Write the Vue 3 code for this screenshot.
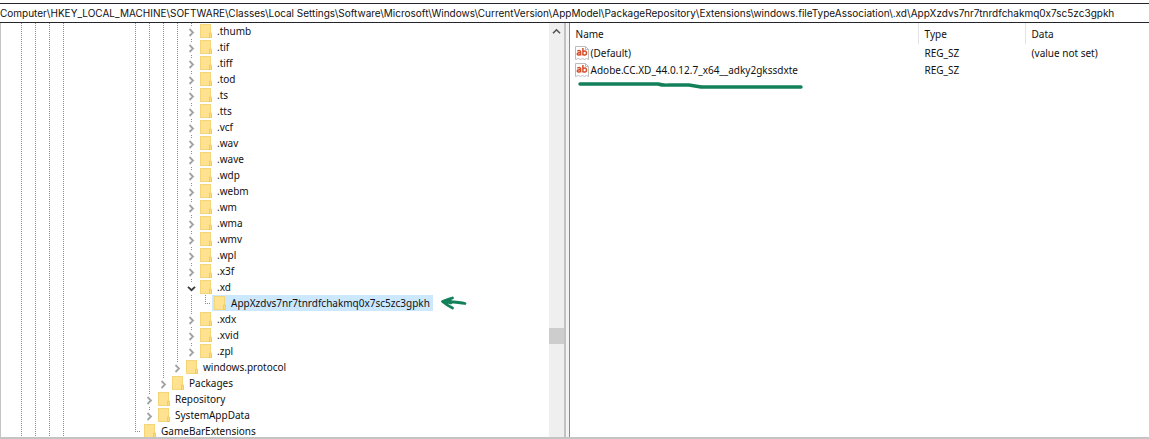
<script setup>
import { ref } from 'vue'

const path = ref('Computer\\HKEY_LOCAL_MACHINE\\SOFTWARE\\Classes\\Local Settings\\Software\\Microsoft\\Windows\\CurrentVersion\\AppModel\\PackageRepository\\Extensions\\windows.fileTypeAssociation\\.xd\\AppXzdvs7nr7tnrdfchakmq0x7sc5zc3gpkh')

// l: dotted guide, e: end of a branch, c: collapsed expander, o: open expander
const leaf = (name) => ({ name, cells: 'llllc' })
const rows = [
  ...['.thumb', '.tif', '.tiff', '.tod', '.ts', '.tts', '.vcf', '.wav', '.wave', '.wdp', '.webm', '.wm', '.wma', '.wmv', '.wpl', '.x3f'].map(leaf),
  { name: '.xd', cells: 'llllo' },
  { name: 'AppXzdvs7nr7tnrdfchakmq0x7sc5zc3gpkh', cells: 'llllle', selected: true },
  ...['.xdx', '.xvid', '.zpl'].map(leaf),
  { name: 'windows.protocol', cells: 'lllc' },
  { name: 'Packages', cells: 'llc' },
  { name: 'Repository', cells: 'lc' },
  { name: 'SystemAppData', cells: 'lc' },
  { name: 'GameBarExtensions', cells: 'e' },
]

const values = [
  { name: '(Default)', type: 'REG_SZ', data: '(value not set)' },
  { name: 'Adobe.CC.XD_44.0.12.7_x64__adky2gkssdxte', type: 'REG_SZ', data: '' },
]
</script>

<template>
  <div class="editor">
    <input v-model="path" class="address" type="text" aria-label="Registry path" spellcheck="false" />
    <main class="panes">
      <section class="tree-pane">
        <ul class="tree">
          <li v-for="row in rows" :key="row.name" class="row">
            <span class="roots"><i v-for="n in 4" :key="n" class="cell l"></i></span>
            <template v-for="(c, i) in row.cells" :key="i">
              <button v-if="c === 'c' || c === 'o'" class="cell toggle" type="button" :aria-label="'Toggle ' + row.name" :aria-expanded="c === 'o'">
                <svg v-if="c === 'c'" width="7" height="9" viewBox="0 0 7 9"><path d="M1.5 1l3.5 3.5L1.5 8" fill="none" stroke="#a3a3a3" stroke-width="1.8" /></svg>
                <svg v-else width="9" height="9" viewBox="0 0 9 9"><path d="M1 2.8l3.5 3.4L8 2.8" fill="none" stroke="#3b3b3b" stroke-width="1.8" /></svg>
              </button>
              <i v-else class="cell" :class="c"></i>
            </template>
            <span class="node" :class="{ selected: row.selected }">
              <svg class="folder" width="12" height="14" viewBox="0 0 12 14">
                <path d="M0 0h11v9h1v5H0z" fill="#f4d577" />
                <path d="M1 1h9v8l-1 1v3H1z" fill="#fee290" />
                <path d="M9.500 9h2v4.500h-2z" fill="#fbdb7c" stroke="#f0ca62" stroke-width=".8" />
              </svg>
              <span>{{ row.name }}</span>
            </span>
            <svg v-if="row.selected" class="arrow" width="28" height="14" viewBox="0 0 28 14">
              <path d="M25 7.500C19 6 12 6 3 5.500M12.500 2C9 3.300 6 4 2.500 5.500c3 2.500 6 4.500 10 6.500M4 5.500l6-1.500 1 3z" fill="none" stroke="#128059" stroke-width="2.800" stroke-linecap="round" stroke-linejoin="round" />
            </svg>
          </li>
        </ul>
        <div class="scrollbar">
          <button class="up" type="button" aria-label="Scroll up">
            <svg width="9" height="7" viewBox="0 0 9 7"><path d="M1 5.300l3.500-3.500L8 5.300" fill="none" stroke="#555" stroke-width="1.600" /></svg>
          </button>
          <div class="space-above"></div>
          <div class="thumb"></div>
          <div class="space-below"></div>
        </div>
      </section>
      <section class="value-pane">
        <table class="values">
          <thead>
            <tr><th class="col-name">Name</th><th class="col-type">Type</th><th>Data</th></tr>
          </thead>
          <tbody>
            <tr v-for="v in values" :key="v.name">
              <td>
                <span class="value-name">
                  <svg width="14" height="14" viewBox="0 0 14 14" role="img" aria-label="String value">
                    <path d="M.5.5h10l3 3v10l-2-1-2 1-2-1-2 1-2-1-3 1z" fill="#fff" stroke="#bcbcbc" />
                    <path d="M10.500.5v3h3" fill="none" stroke="#bcbcbc" />
                    <g fill="none" stroke="#d94e2a" stroke-width="1.500">
                      <path d="M2.300 5Q5.600 3.900 5.600 6v3.600M5.600 6.800Q2.200 6.500 2.200 8.200 2.600 9.900 5.600 8.300M7.900 2v7.600M7.900 5.600Q11.500 3.800 11.500 7.100 11.300 10 7.900 8.600" />
                    </g>
                  </svg>
                  {{ v.name }}
                </span>
              </td>
              <td>{{ v.type }}</td>
              <td>{{ v.data }}</td>
            </tr>
          </tbody>
        </table>
        <svg class="underline" width="228" height="10" viewBox="0 0 228 10">
          <path d="M3 3H81Q86 4.500 92 4H112Q118 5 124 6H224" fill="none" stroke="#128059" stroke-width="3.400" stroke-linecap="round" />
        </svg>
      </section>
    </main>
  </div>
</template>

<style>
body { margin: 0; background: #fff; }
</style>

<style scoped>
.editor {
  box-sizing: border-box;
  display: flex;
  flex-direction: column;
  height: 100vh;
  padding-top: 3px;
  color: #111;
  font: 10px/16px "Noto Sans", "Open Sans", sans-serif;
}
.address {
  box-sizing: border-box;
  width: 100%;
  height: 20px;
  flex: none;
  padding: 0;
  border: solid #25262b;
  border-width: 1px 0;
  outline: none;
  background: #fff;
  color: inherit;
  font: 10px/16px Inter, "Noto Sans", sans-serif;
}
.panes {
  display: flex;
  flex: 1;
  min-height: 0;
  border-left: 1px solid #c4c4c4;
  border-bottom: 2px solid #c4c4c4;
}
.tree-pane {
  display: flex;
  flex: 565 1 0;
  min-width: 0;
  border-right: 2px solid #c2c2c2;
}
.tree {
  flex: 1;
  min-width: 0;
  margin: 0;
  padding: 0;
  overflow: hidden;
  list-style: none;
}
.row {
  display: flex;
  height: 16px;
  align-items: center;
  white-space: nowrap;
}
.roots {
  display: flex;
  width: 115px;
  padding-left: 13px;
  box-sizing: border-box;
  flex: none;
}
.cell {
  display: block;
  width: 14px;
  height: 16px;
  flex: none;
}
.roots + .cell { margin-left: 12px; }
.l, .toggle {
  background: repeating-linear-gradient(#8c8c8c 0 1px, transparent 1px 2px) 7px 0 / 1px 16px no-repeat;
}
.e {
  background:
    repeating-linear-gradient(#8c8c8c 0 1px, transparent 1px 2px) 7px 0 / 1px 9px no-repeat,
    repeating-linear-gradient(90deg, #8c8c8c 0 1px, transparent 1px 2px) 7px 8px / 6px 1px no-repeat;
}
.toggle {
  display: flex;
  align-items: center;
  justify-content: center;
  padding: 2px 0 0;
  border: 0;
}
.toggle svg {
  padding: 2px 0;
  background: #fff;
}
.node {
  display: flex;
  height: 16px;
  align-items: center;
  gap: 5px;
  padding: 0 3px 0 2px;
}
.selected { background: #cce8ff; }
.folder { flex: none; }
.arrow {
  margin-left: 7px;
  flex: none;
}
.scrollbar {
  display: flex;
  flex-direction: column;
  width: 15px;
  flex: none;
  background: #efefef;
}
.up {
  display: grid;
  place-items: center;
  height: 16px;
  padding: 0;
  border: 0;
  background: none;
}
.space-above { flex: 289; }
.thumb {
  height: 16px;
  background: #cdcdcd;
}
.space-below { flex: 93; }
.value-pane {
  position: relative;
  flex: 583 1 0;
  min-width: 0;
  border-left: 3px solid #f3f3f3;
}
.values {
  width: 100%;
  border-left: 1px solid transparent;
  border-collapse: separate;
  border-spacing: 0;
  table-layout: fixed;
}
.value-pane::before {
  content: "";
  position: absolute;
  inset: 0 auto 0 0;
  border-left: 1px solid #8a8a8a;
}
.values th, .values td {
  height: 17px;
  padding: 0 0 0 6px;
  font-weight: 400;
  text-align: left;
  white-space: nowrap;
}
.values th {
  height: 21px;
}
.values th + th { border-left: 1px solid #e3e3e3; }
.values td + td { padding-left: 7px; }
.col-name { width: 342px; }
.col-type { width: 100px; }
.value-name {
  display: flex;
  align-items: center;
  gap: 2px;
  margin-left: -1px;
}
.underline {
  position: absolute;
  top: 58px;
  left: 8px;
}
</style>
